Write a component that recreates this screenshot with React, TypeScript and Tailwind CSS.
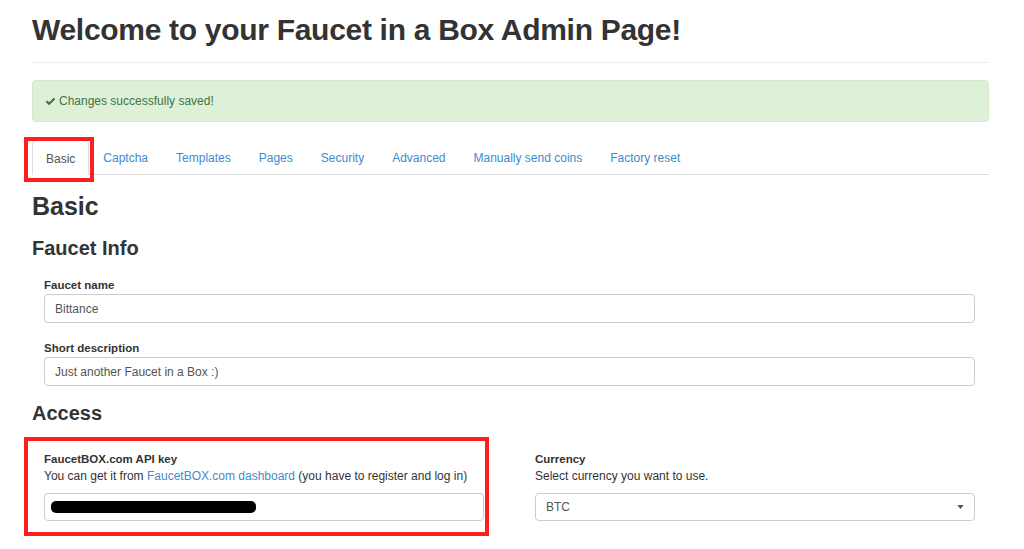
const tabs = [
  'Basic',
  'Captcha',
  'Templates',
  'Pages',
  'Security',
  'Advanced',
  'Manually send coins',
  'Factory reset',
]

function CheckIcon() {
  return (
    <svg viewBox="0 0 16 16" className="w-[11px] h-[11px] text-[#3c763d]" fill="currentColor">
      <path d="M1 8.6 L3.2 6.4 L6 9.2 L12.8 2.4 L15 4.6 L6 13.6 Z" />
    </svg>
  )
}

function Field({ label, value }: { label: string; value: string }) {
  return (
    <div>
      <label className="block text-[11.5px] font-bold text-[#333] leading-[16px] mb-[1px]">{label}</label>
      <div className="h-[29px] border border-[#ccc] rounded-[4px] px-[10px] flex items-center text-[12px] text-[#555] bg-white">
        {value}
      </div>
    </div>
  )
}

export default function App() {
  return (
    <div
      className="relative w-[1024px] h-[549px] overflow-hidden bg-white text-[#333]"
      style={{ fontFamily: '"Liberation Sans", Arial, sans-serif' }}
    >
      <div className="pl-[32px] pr-[35px]">
        <h1 className="pt-[12px] text-[30px] font-bold leading-[36px] tracking-[-0.3px] text-[#333]">
          Welcome to your Faucet in a Box Admin Page!
        </h1>
        <div className="mt-[14px] border-t border-[#eee]" />

        <div className="mt-[17px] h-[42px] rounded-[4px] border border-[#d6e9c6] bg-[#dff0d8] px-[12px] flex items-center gap-[3px] text-[12px] text-[#3c763d]">
          <CheckIcon />
          <span>Changes successfully saved!</span>
        </div>

        <ul className="mt-[18px] flex border-b border-[#ddd] h-[35px]">
          {tabs.map((t, i) => (
            <li
              key={t}
              className={
                i === 0
                  ? 'px-[13px] pt-[2px] flex items-center text-[12px] text-[#555] bg-white border border-[#ddd] border-b-white rounded-t-[4px] -mb-px'
                  : 'px-[14px] pt-[2px] flex items-center text-[12px] text-[#428bca]'
              }
            >
              {t}
            </li>
          ))}
        </ul>

        <h2 className="mt-[17px] text-[25px] font-bold leading-[28px]">Basic</h2>
        <h3 className="mt-[16px] text-[20px] font-bold leading-[24px]">Faucet Info</h3>

        <div className="pl-[12px] pr-[14px] mt-[17px] flex flex-col gap-[17px]">
          <Field label="Faucet name" value="Bittance" />
          <Field label="Short description" value="Just another Faucet in a Box :)" />
        </div>

        <h3 className="mt-[15px] text-[20px] font-bold leading-[24px]">Access</h3>

        <div className="pl-[12px] pr-[14px] mt-[26px] grid grid-cols-2 gap-[51px]">
          <div>
            <label className="block text-[11.5px] font-bold leading-[16px]">FaucetBOX.com API key</label>
            <p className="mt-[1px] text-[12px] leading-[17px] text-[#333]">
              You can get it from <span className="text-[#428bca]">FaucetBOX.com dashboard</span> (you have to
              register and log in)
            </p>
            <div className="mt-[8px] h-[28px] border border-[#ccc] rounded-[4px] px-[6px] flex items-center bg-white">
              <div className="h-[12px] w-[205px] bg-black rounded-[5px] blur-[0.6px]" />
            </div>
          </div>
          <div>
            <label className="block text-[11.5px] font-bold leading-[16px]">Currency</label>
            <p className="mt-[1px] text-[12px] leading-[17px]">Select currency you want to use.</p>
            <div className="mt-[8px] h-[28px] border border-[#ccc] rounded-[4px] pl-[10px] pr-[10px] flex items-center justify-between text-[12px] text-[#555] bg-white">
              <span>BTC</span>
              <svg viewBox="0 0 8 5" className="w-[7px] h-[4px]" fill="#555">
                <path d="M0 0 H8 L4 5 Z" />
              </svg>
            </div>
          </div>
        </div>
      </div>

      {/* hand-drawn highlight frames */}
      <div className="absolute left-[24px] top-[137px] w-[70px] h-[45px] border-[4px] border-[#ff1e1e] blur-[0.4px]" />
      <div className="absolute left-[24px] top-[437px] w-[465px] h-[99px] border-[4px] border-[#ff1e1e] blur-[0.4px]" />
    </div>
  )
}
